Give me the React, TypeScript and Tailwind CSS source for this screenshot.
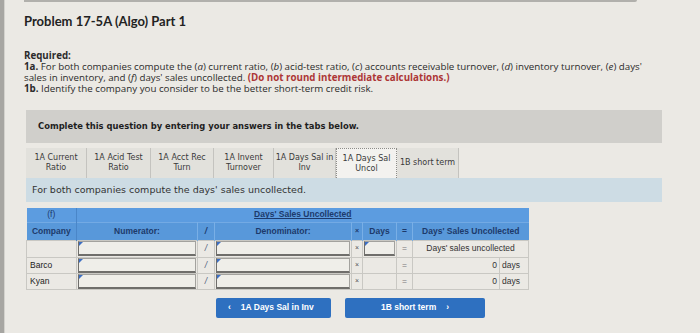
import React from 'react';

const tabs = [
  ['1A Current', 'Ratio'],
  ['1A Acid Test', 'Ratio'],
  ['1A Acct Rec', 'Turn'],
  ['1A Invent', 'Turnover'],
  ['1A Days Sal in', 'Inv'],
  ['1A Days Sal', 'Uncol'],
  ['1B short term'],
];

const tabWidths = ['w-[61px]', 'w-[64px]', 'w-[63px]', 'w-[60px]', 'w-[62px]', 'w-[61px]', 'w-[62px]'];

// input box with the little blue corner marker
const InputBox = () => (
  <div className="relative h-[15px] mx-[1px] bg-[#efeee9] border border-[#a3a29e] border-l-[#6f6e6b] border-b-2 border-b-[#6f6e6b]">
    <span className="absolute left-0 top-0 w-0 h-0 border-t-[4px] border-t-[#3d6fc4] border-r-[4px] border-r-transparent" />
  </div>
);

const Slash = () => <td className="border border-[#c9c8c3] text-center italic text-[#4a5a78]">/</td>;
const Times = () => <td className="border border-[#c9c8c3] text-center text-[7px] text-[#555]">×</td>;
const Equals = () => <td className="border border-[#c9c8c3] text-center text-[#777]">=</td>;

const App = () => {
  const rows = [
    { company: '', input: true },
    { company: 'Barco', input: false },
    { company: 'Kyan', input: false },
  ];

  return (
    <div className="w-[700px] h-[333px] overflow-hidden flex bg-[#ebe9e4] text-[#2b2b2b]">
      {/* left edge of the monitor */}
      <div className="w-[5px] bg-[#a7a6a2] border-r border-[#d3d2cd]" />

      <div className="flex-1 flex flex-col">
        <div className="ml-[19px] w-[613px] h-[2px] bg-[#b1b0ac] rounded-br" />

        <div className="pl-[19px]">
          <h1 className="mt-[11px] font-['Lato',sans-serif] text-[13px] leading-[16px] font-bold text-[#222]">Problem 17-5A (Algo) Part 1</h1>

          <div className="mt-[21px] font-['Open_Sans',sans-serif] text-[9.75px] leading-[11px] whitespace-nowrap">
            <p className="font-bold">Required:</p>
            <p>
              <b>1a.</b> For both companies compute the (<i>a</i>) current ratio, (<i>b</i>) acid-test ratio, (<i>c</i>) accounts receivable turnover, (<i>d</i>) inventory turnover, (<i>e</i>) days'
            </p>
            <p>
              sales in inventory, and (<i>f</i>) days' sales uncollected. <b className="text-[#ad3636]">(Do not round intermediate calculations.)</b>
            </p>
            <p>
              <b>1b.</b> Identify the company you consider to be the better short-term credit risk.
            </p>
          </div>
        </div>

        <div className="ml-[21px] w-[636px] font-['DejaVu_Sans',sans-serif]">
          <div className="mt-[16px] h-[33px] bg-[#d0cfcb] flex items-center pl-[12px] text-[8.4px] font-bold text-[#1e1e1e]">
            Complete this question by entering your answers in the tabs below.
          </div>

          <div className="mt-[5px] h-[30px] flex text-[8px] leading-[10px] text-[#3a3a3a]">
            {tabs.map((t, i) => (
              <div
                key={i}
                className={
                  tabWidths[i] +
                  ' flex flex-col items-center justify-center text-center whitespace-nowrap ' +
                  (i === 5
                    ? 'bg-[#f3f2ef] border border-b-0 border-dotted border-[#8d8c88]'
                    : 'bg-[#e2e1dc] border-r border-[#c4c3bf]')
                }
              >
                {t.map((line, j) => (
                  <span key={j}>{line}</span>
                ))}
              </div>
            ))}
          </div>

          <div className="h-[24px] bg-[#cddce4] pl-[6px] pt-[6px] text-[9.5px] leading-[12px] text-[#333]">
            For both companies compute the days' sales uncollected.
          </div>

          <table className="mt-[6px] w-[502px] table-fixed border-collapse font-['Liberation_Sans',sans-serif] text-[8.5px]">
            <colgroup>
              <col className="w-[50px]" />
              <col className="w-[121px]" />
              <col className="w-[17px]" />
              <col className="w-[137px]" />
              <col className="w-[11px]" />
              <col className="w-[34px]" />
              <col className="w-[16px]" />
              <col className="w-[87px]" />
              <col className="w-[29px]" />
            </colgroup>
            <thead className="font-bold text-[#1d3a6b]">
              <tr className="h-[14px] bg-[#5c9ce0]">
                <td className="text-center border-r border-[#4a86c8] font-normal">(f)</td>
                <td colSpan={8} className="text-center">
                  <span className="underline">Days' Sales Uncollected</span>
                </td>
              </tr>
              <tr className="h-[18px] bg-[#5898da] border-t border-[#73aae4]">
                <td className="text-center border-r border-[#4a86c8]">Company</td>
                <td className="text-center border-r border-[#79afe6]">Numerator:</td>
                <td className="text-center border-r border-[#79afe6] italic">/</td>
                <td className="text-center border-r border-[#79afe6]">Denominator:</td>
                <td className="text-center border-r border-[#79afe6] text-[7px]">×</td>
                <td className="text-center border-r border-[#79afe6]">Days</td>
                <td className="text-center border-r border-[#79afe6]">=</td>
                <td colSpan={2} className="text-center">Days' Sales Uncollected</td>
              </tr>
            </thead>
            <tbody>
              {rows.map((r, i) => (
                <tr key={i} className={i === 0 ? 'h-[17px]' : 'h-[16px]'}>
                  <td className="border border-[#c9c8c3] pl-[3px] text-[#222]">{r.company}</td>
                  <td className="border border-[#c9c8c3] p-0"><InputBox /></td>
                  <Slash />
                  <td className="border border-[#c9c8c3] p-0"><InputBox /></td>
                  <Times />
                  <td className="border border-[#c9c8c3] p-0">{r.input && <InputBox />}</td>
                  <Equals />
                  {r.input ? (
                    <td colSpan={2} className="border border-[#c9c8c3] text-center text-[#333]">Days' sales uncollected</td>
                  ) : (
                    <>
                      <td className="border border-[#c9c8c3] text-right pr-[2px] text-[#333]">0</td>
                      <td className="border border-[#c9c8c3] pl-[2px] text-[#333]">days</td>
                    </>
                  )}
                </tr>
              ))}
            </tbody>
          </table>

          <div className="mt-[8px] ml-[190px] flex gap-[14px] font-['Liberation_Sans',sans-serif] text-[8.5px] font-bold text-white">
            <button className="w-[115px] h-[20px] bg-[#2e70c0] rounded-[2px] flex items-center pl-[12px]">
              <span className="mr-[10px]">‹</span>1A Days Sal in Inv
            </button>
            <button className="w-[140px] h-[20px] bg-[#2e70c0] rounded-[2px] flex items-center justify-center">
              1B short term<span className="ml-[10px]">›</span>
            </button>
          </div>
        </div>
      </div>
    </div>
  );
};

export default App;
